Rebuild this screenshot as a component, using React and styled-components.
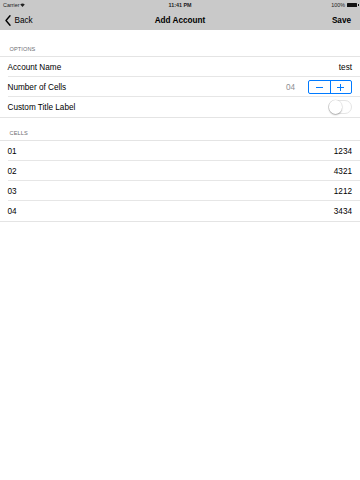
import React, { useState } from 'react';
import styled, { createGlobalStyle } from 'styled-components';

const GlobalStyle = createGlobalStyle`
    html, body {
        margin: 0;
        padding: 0;
        background: #ffffff;
        font-family: "Liberation Sans", Arial, sans-serif;
        color: #000;
    }
`;

const options = [
    { id: 'name', label: 'Account Name' },
    { id: 'cells', label: 'Number of Cells' },
    { id: 'title', label: 'Custom Title Label' },
];

const cells = [
    { id: '01', value: '1234' },
    { id: '02', value: '4321' },
    { id: '03', value: '1212' },
    { id: '04', value: '3434' },
];

const Wifi = () => (
    <svg width="5" height="4" viewBox="0 0 10 8">
        <path d="M5 8 L0.5 3 A6.5 6.5 0 0 1 9.5 3 Z" fill="#222" />
    </svg>
);

const Chevron = () => (
    <svg width="6" height="11" viewBox="0 0 6 11">
        <path d="M5 0.8 L1 5.5 L5 10.2" fill="none" stroke="#000" strokeWidth="1.4" strokeLinecap="round" strokeLinejoin="round" />
    </svg>
);

export const App = () => {
    const [count, setCount] = useState(4);
    const [custom, setCustom] = useState(false);

    return (
    <>
        <GlobalStyle />
        <Screen>
            <TopBar>
                <StatusBar>
                    <Carrier>Carrier <Wifi /></Carrier>
                    <Clock>11:41 PM</Clock>
                    <Power>100% <Battery /></Power>
                </StatusBar>
                <NavBar>
                    <BackButton><Chevron />Back</BackButton>
                    <NavTitle>Add Account</NavTitle>
                    <SaveButton>Save</SaveButton>
                </NavBar>
            </TopBar>

            <SectionHeader tall>OPTIONS</SectionHeader>
            <Group>
                {options.map((o, i) => (
                    <Row key={o.id} last={i === options.length - 1}>
                        <Label>{o.label}</Label>
                        {o.id === 'name' && <Value>test</Value>}
                        {o.id === 'cells' && (
                            <Accessory>
                                <Muted>{String(count).padStart(2, '0')}</Muted>
                                <Stepper>
                                    <StepButton onClick={() => setCount(Math.max(0, count - 1))}>
                                        <Minus />
                                    </StepButton>
                                    <StepButton divider onClick={() => setCount(count + 1)}>
                                        <Plus />
                                    </StepButton>
                                </Stepper>
                            </Accessory>
                        )}
                        {o.id === 'title' && (
                            <Switch on={custom} onClick={() => setCustom(!custom)}>
                                <Knob on={custom} />
                            </Switch>
                        )}
                    </Row>
                ))}
            </Group>

            <SectionHeader>CELLS</SectionHeader>
            <Group>
                {cells.map((c, i) => (
                    <Row key={c.id} last={i === cells.length - 1}>
                        <Label>{c.id}</Label>
                        <Value>{c.value}</Value>
                    </Row>
                ))}
            </Group>
        </Screen>
    </>
    );
}

const Screen = styled.div`
    width: 360px;
    min-height: 480px;
    background: #ffffff;
`;

const TopBar = styled.div`
    background-color: #c9c9c9;
    height: 30px;
    display: flex;
    flex-direction: column;
`;

const StatusBar = styled.div`
    height: 9.5px;
    display: flex;
    align-items: center;
    justify-content: space-between;
    padding: 0 3px;
    font-size: 5.4px;
    color: #222;
`;

const Carrier = styled.div`
    flex: 1;
    display: flex;
    align-items: center;
    gap: 1px;
`;

const Clock = styled.div`
    font-weight: bold;
`;

const Power = styled.div`
    flex: 1;
    display: flex;
    justify-content: flex-end;
    align-items: center;
    gap: 2px;
`;

const Battery = styled.span`
    display: inline-block;
    width: 10px;
    height: 4px;
    background: #111;
    border-radius: 0.5px;
    position: relative;

    &:after {
        content: '';
        position: absolute;
        right: -1.5px;
        top: 1.2px;
        width: 1px;
        height: 1.6px;
        background: #111;
    }
`;

const NavBar = styled.div`
    flex: 1;
    display: flex;
    align-items: center;
    justify-content: space-between;
    padding: 1px 9px 0 5px;
    font-size: 8.2px;
    position: relative;
`;

const BackButton = styled.div`
    display: flex;
    align-items: center;
    gap: 3.5px;
    cursor: pointer;
`;

const NavTitle = styled.div`
    position: absolute;
    left: 0;
    right: 0;
    text-align: center;
    font-weight: bold;
    pointer-events: none;
`;

const SaveButton = styled.div`
    font-weight: bold;
    cursor: pointer;
`;

const SectionHeader = styled.div`
    height: ${({ tall }) => tall ? 26 : 22}px;
    box-sizing: border-box;
    display: flex;
    align-items: flex-end;
    padding: 0 0 4px 9.5px;
    font-size: 5.6px;
    color: #6d6d72;
    letter-spacing: 0.1px;
`;

const Group = styled.div`
    border-top: 1px solid #e4e4e4;
    border-bottom: 1px solid #e4e4e4;
`;

const Row = styled.div`
    height: 20px;
    box-sizing: border-box;
    display: flex;
    align-items: center;
    justify-content: space-between;
    padding: 0 8px 0 7.5px;
    font-size: 8.2px;
    background-image: ${({ last }) => last ? 'none' : 'linear-gradient(#e6e6e6, #e6e6e6)'};
    background-size: calc(100% - 7.5px) 1px;
    background-position: right bottom;
    background-repeat: no-repeat;
`;

const Label = styled.span`
    color: #000;
`;

const Value = styled.span`
    color: #000;
`;

const Accessory = styled.div`
    display: flex;
    align-items: center;
    gap: 13px;
`;

const Muted = styled.span`
    color: #8e8e93;
`;

const Stepper = styled.div`
    display: flex;
    width: 44px;
    height: 13.5px;
    box-sizing: border-box;
    border: 1px solid #007aff;
    border-radius: 2px;
`;

const StepButton = styled.div`
    flex: 1;
    display: flex;
    align-items: center;
    justify-content: center;
    border-left: ${({ divider }) => divider ? '1px solid #007aff' : 'none'};
    cursor: pointer;
`;

const Minus = styled.span`
    width: 7px;
    height: 1px;
    background: #007aff;
`;

const Plus = styled.span`
    width: 7px;
    height: 7px;
    background: linear-gradient(#007aff, #007aff) center / 7px 1px no-repeat,
        linear-gradient(#007aff, #007aff) center / 1px 7px no-repeat;
`;

const Switch = styled.div`
    width: 24px;
    height: 14.5px;
    box-sizing: border-box;
    border-radius: 8px;
    border: 1px solid #e5e5e5;
    background: ${({ on }) => on ? '#4cd964' : '#ffffff'};
    position: relative;
    cursor: pointer;
`;

const Knob = styled.div`
    position: absolute;
    top: -0.5px;
    left: ${({ on }) => on ? '10px' : '-0.5px'};
    width: 13.5px;
    height: 13.5px;
    border-radius: 50%;
    background: #ffffff;
    box-shadow: 0 1px 1.5px rgba(0, 0, 0, 0.3), 0 0 0 0.5px rgba(0, 0, 0, 0.08);
`;

export default App;
